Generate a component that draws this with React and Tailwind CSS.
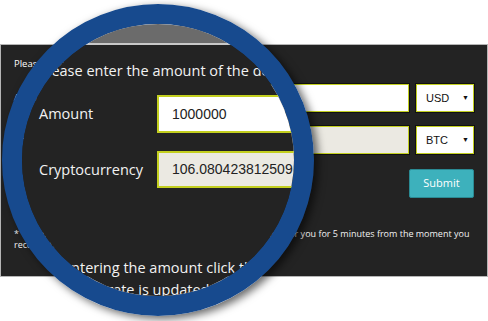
import React from 'react';

const sans = "font-['Open_Sans',sans-serif]";
const arial = "font-['Liberation_Sans',Arial,sans-serif]";

// Small select box with the little triangle
const SmallSelect = ({ label }) => (
  <div className={`flex h-[28px] w-[58px] shrink-0 items-center justify-between border border-[#c3cf1f] bg-white pl-[9px] pr-[4px] text-[11px] text-[#111] shadow-[0_0_0_1px_#111] ${arial}`}>
    <span>{label}</span>
    <span className="text-[7px]">▼</span>
  </div>
);

const SmallRow = ({ label, value, sel, fill }) => (
  <div className="flex items-center gap-[7px]">
    <span className="w-[100px] shrink-0 text-[9.5px] text-white">{label}</span>
    <div className={`flex h-[28px] flex-1 items-center border border-[#c3cf1f] px-[8px] text-[9px] text-[#222] shadow-[0_0_0_1px_#111] ${arial} ${fill}`}>
      {value}
    </div>
    <SmallSelect label={sel} />
  </div>
);

const BigRow = ({ label, value, fill, h }) => (
  <div className="flex items-center">
    <span className="w-[118px] shrink-0 text-[14.5px] text-[#f2f2f2]">{label}</span>
    <div className={`flex w-[300px] shrink-0 items-center border-2 border-[#c3cf1f] pl-[13px] text-[14px] text-[#222] ${arial} ${fill} ${h}`}>
      {value}
    </div>
  </div>
);

export default function App() {
  return (
    <div className={`relative h-[321px] w-[488px] overflow-hidden bg-white ${sans}`}>
      {/* exchange form panel */}
      <div className="mt-[44px] flex h-[233px] w-[488px] flex-col border border-[#b5b5b5] bg-[#232323] pl-[13px] pr-[13px] pt-[12px]">
        <p className="h-[13px] text-[9.5px] leading-[13px] text-white">
          Please enter the amount of the desired currency
        </p>
        <div className="mt-[14px] flex flex-col gap-[14px]">
          <SmallRow label="Amount" value="1000000" sel="USD" fill="bg-white" />
          <SmallRow label="Cryptocurrency" value="106.080423812509" sel="BTC" fill="bg-[#ebe9e2]" />
        </div>
        <div className="mt-[15px] flex justify-end">
          <button className="h-[29px] w-[65px] rounded-[2px] border border-[#2a8a93] bg-[#3db1bc] text-[11px] text-white">
            Submit
          </button>
        </div>
        <p className="mt-[30px] whitespace-nowrap text-[9px] leading-[11px] text-[#f2f2f2]">
          * The exchange rate displayed above will be reserved exclusively for you for 5 minutes from the moment you
          <br />
          receive the calculation.
        </p>
      </div>

      {/* magnifier lens */}
      <div className="absolute left-[2px] top-[4px] h-[312px] w-[312px] overflow-hidden rounded-full border-[20px] border-[#174a8e] shadow-[4px_3px_8px_rgba(0,0,0,0.6)]">
        <div className="flex h-full flex-col">
          <div className="h-[19px] shrink-0 bg-[#6b6b6b]" />
          <div className="h-[2px] shrink-0 bg-[#c8c8c8]" />
          <div className="flex-1 bg-[#232323] pl-[17px] pt-[16px]">
            <p className="whitespace-nowrap text-[14.5px] leading-[20px] text-[#f2f2f2]">
              Please enter the amount of the desired currency
            </p>
            <div className="mt-[14px]">
              <BigRow label="Amount" value="1000000" fill="bg-white" h="h-[38px]" />
            </div>
            <div className="mt-[18px]">
              <BigRow label="Cryptocurrency" value="106.080423812509" fill="bg-[#ebe9e2]" h="h-[37px]" />
            </div>
            <div className="mt-[69px] whitespace-nowrap text-[14.5px] leading-[22px] text-[#f2f2f2]">
              <p>On entering the amount click the Submit button.</p>
              <p>Exchange rate is updated every 5 minutes.</p>
            </div>
          </div>
        </div>
      </div>
    </div>
  );
}
